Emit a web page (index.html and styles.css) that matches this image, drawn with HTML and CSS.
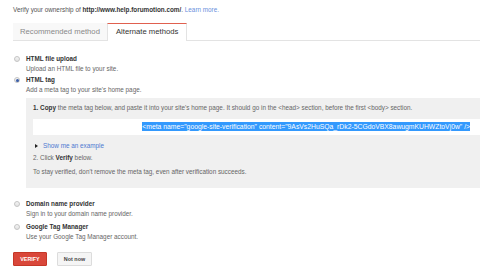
FILE: index.html
```html
<!DOCTYPE html>
<html lang="en">
<head>
    <meta charset="UTF-8">
    <meta name="viewport" content="width=device-width, initial-scale=1.0">
    <title>Verify ownership</title>
    <link rel="stylesheet" href="styles.css">
</head>
<body>
    <div class="page">
        <p class="intro">Verify your ownership of <strong>http://www.help.forumotion.com/</strong>. <a href="#">Learn more.</a></p>

        <div class="tabs">
            <div class="tab">Recommended method</div>
            <div class="tab active">Alternate methods</div>
        </div>

        <ul class="methods">
            <li class="method">
                <span class="radio"></span>
                <div class="method-body">
                    <div class="method-title">HTML file upload</div>
                    <div class="method-desc">Upload an HTML file to your site.</div>
                </div>
            </li>
            <li class="method">
                <span class="radio checked"></span>
                <div class="method-body">
                    <div class="method-title">HTML tag</div>
                    <div class="method-desc">Add a meta tag to your site's home page.</div>
                    <div class="instructions">
                        <p class="step"><b>1. Copy</b> the meta tag below, and paste it into your site's home page. It should go in the &lt;head&gt; section, before the first &lt;body&gt; section.</p>
                        <div class="meta-field"><span class="selected">&lt;meta name="google-site-verification" content="9AsVs2HuSQa_rDk2-5CGdoVBX8awugmKUHWZtoVj0w" /&gt;</span></div>
                        <p class="example"><span class="arrow"></span><a href="#">Show me an example</a></p>
                        <p class="step step-two">2. Click <b>Verify</b> below.</p>
                        <p class="step step-note">To stay verified, don't remove the meta tag, even after verification succeeds.</p>
                    </div>
                </div>
            </li>
            <li class="method">
                <span class="radio"></span>
                <div class="method-body">
                    <div class="method-title">Domain name provider</div>
                    <div class="method-desc">Sign in to your domain name provider.</div>
                </div>
            </li>
            <li class="method">
                <span class="radio"></span>
                <div class="method-body">
                    <div class="method-title">Google Tag Manager</div>
                    <div class="method-desc">Use your Google Tag Manager account.</div>
                </div>
            </li>
        </ul>

        <div class="actions">
            <button class="btn btn-verify">VERIFY</button>
            <button class="btn btn-later">Not now</button>
        </div>
    </div>
</body>
</html>
```

FILE: styles.css
```css
* {
    margin: 0;
    padding: 0;
    box-sizing: border-box;
}

body {
    font-family: 'Liberation Sans', Arial, sans-serif;
    font-size: 6.35px;
    color: #666;
    background: #fff;
    width: 480px;
    height: 270px;
    overflow: hidden;
}

a {
    color: #4d79d0;
    text-decoration: none;
}

.page {
    padding-left: 13px;
    width: 480px;
}

.intro {
    padding-top: 6px;
    line-height: 8px;
    color: #555;
}

.intro strong {
    color: #333;
}

.intro a {
    color: #6a90dc;
}

/* tabs */
.tabs {
    display: flex;
    margin-top: 9px;
    border-bottom: 1px solid #e3e3e3;
}

.tab {
    height: 17px;
    line-height: 16px;
    padding: 0 7px;
    font-size: 7.7px;
    color: #888;
    background: #f8f8f8;
    border-top: 1px solid transparent;
}

.tab.active {
    color: #333;
    background: #fff;
    padding: 0 8px;
    border-top: 1px solid #e0604f;
    border-left: 1px solid #e3e3e3;
    border-right: 1px solid #e3e3e3;
    margin-bottom: -1px;
    height: 18px;
}

/* methods */
.methods {
    list-style: none;
    margin-top: 13px;
}

.method {
    display: flex;
    gap: 6px;
    padding-left: 1px;
    margin-bottom: 1px;
}

.method:nth-child(3) {
    margin-bottom: 3px;
}

.radio {
    flex: none;
    width: 6px;
    height: 6px;
    margin-top: 2px;
    border-radius: 50%;
    border: 1px solid #c4c4c4;
    background: linear-gradient(#f4f4f4, #e2e2e2);
    display: flex;
    align-items: center;
    justify-content: center;
}

.radio.checked::after {
    content: "";
    width: 3px;
    height: 3px;
    border-radius: 50%;
    background: #3b5ea8;
}

.method-body {
    flex: 1;
}

.method-title {
    line-height: 10px;
    font-weight: bold;
    color: #333;
}

.method-desc {
    line-height: 10px;
    color: #666;
}

/* html tag instructions */
.instructions {
    background: #f0f0f0;
    margin-top: 3px;
    margin-bottom: 10px;
    padding: 5px 0 11px 7px;
}

.step {
    line-height: 10px;
    color: #666;
}

.step b {
    color: #333;
}

.meta-field {
    background: #fff;
    height: 16px;
    margin-top: 6px;
    padding-right: 10px;
    text-align: right;
    line-height: 16px;
    font-size: 6.8px;
    white-space: nowrap;
}

.selected {
    background: #3399fd;
    color: #fff;
    padding: 1px 0;
}

.example {
    margin-top: 6px;
    line-height: 10px;
    display: flex;
    align-items: center;
    gap: 5px;
    padding-left: 2px;
}

.arrow {
    width: 0;
    height: 0;
    border-top: 2px solid transparent;
    border-bottom: 2px solid transparent;
    border-left: 3px solid #222;
}

.step-two {
    margin-top: 2px;
}

.step-note {
    margin-top: 4px;
}

/* buttons */
.actions {
    display: flex;
    gap: 10px;
    margin-top: 10px;
}

.btn {
    font-family: 'Liberation Sans', Arial, sans-serif;
    font-size: 5.4px;
    font-weight: bold;
    height: 14px;
    width: 35px;
    border-radius: 1px;
    cursor: pointer;
}

.btn-verify {
    width: 34px;
    background: #d9473a;
    border: 1px solid #c53727;
    color: #fff;
}

.btn-later {
    background: #f5f5f5;
    border: 1px solid #dcdcdc;
    color: #444;
}
```
